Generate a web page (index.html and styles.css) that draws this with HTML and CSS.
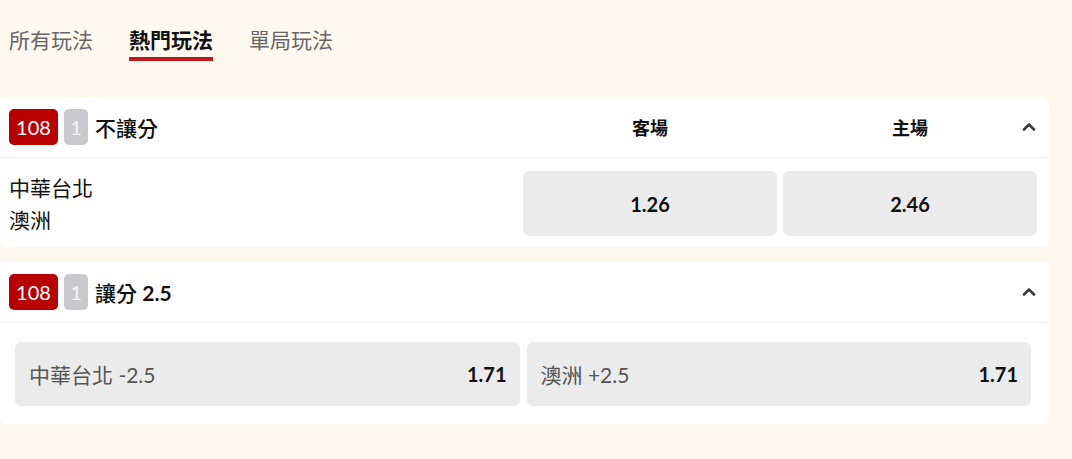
FILE: index.html
```html
<!DOCTYPE html>
<html lang="zh-Hant">
<head>
<meta charset="utf-8">
<link rel="stylesheet" href="styles.css">
</head>
<body>
<nav class="tabs">
  <div class="tab">所有玩法</div>
  <div class="tab active">熱門玩法</div>
  <div class="tab">單局玩法</div>
</nav>

<section class="card">
  <div class="card-head cols">
    <div class="title">
      <span class="badge red">108</span>
      <span class="badge grey">1</span>
      <span class="name">不讓分</span>
    </div>
    <div class="col-label">客場</div>
    <div class="col-label">主場</div>
    <svg class="chev" width="14" height="10" viewBox="0 0 14 10"><polyline points="2,8.5 7,3.5 12,8.5" fill="none" stroke="#3a3a3a" stroke-width="2.6" stroke-linecap="round" stroke-linejoin="round"/></svg>
  </div>
  <div class="row cols">
    <div class="teams">
      <div>中華台北</div>
      <div>澳洲</div>
    </div>
    <div class="odd center">1.26</div>
    <div class="odd center">2.46</div>
  </div>
</section>

<section class="card">
  <div class="card-head">
    <div class="title">
      <span class="badge red">108</span>
      <span class="badge grey">1</span>
      <span class="name">讓分 <span class="num">2.5</span></span>
    </div>
    <svg class="chev" width="14" height="10" viewBox="0 0 14 10"><polyline points="2,8.5 7,3.5 12,8.5" fill="none" stroke="#3a3a3a" stroke-width="2.6" stroke-linecap="round" stroke-linejoin="round"/></svg>
  </div>
  <div class="row spread">
    <div class="odd split"><span class="lbl">中華台北 -2.5</span><span class="val">1.71</span></div>
    <div class="odd split"><span class="lbl">澳洲 +2.5</span><span class="val">1.71</span></div>
  </div>
</section>
</body>
</html>
```

FILE: styles.css
```css
* { box-sizing: border-box; }

body {
  margin: 0;
  background: #fdf9ee;
  font-family: "Lato", "Noto Sans CJK TC", "Noto Sans", sans-serif;
  color: #111;
}

.tabs {
  display: flex;
  gap: 36px;
  padding: 26px 0 0 9px;
}

.tab {
  font-size: 21px;
  line-height: 28px;
  padding-bottom: 3px;
  border-bottom: 4px solid transparent;
  color: #666;
  white-space: nowrap;
}

.tab.active {
  color: #111;
  font-weight: 700;
  border-bottom-color: #bf1a1a;
}

.card {
  position: relative;
  background: #fff;
  border-radius: 6px;
  width: 1049px;
  margin-top: 36px;
}

.card + .card { margin-top: 15px; }

.card-head {
  position: relative;
  height: 61px;
  border-bottom: 1px solid #f1f1f1;
  display: flex;
  align-items: center;
  padding-left: 9px;
}

.cols {
  display: grid;
  grid-template-columns: 1fr 254px 254px;
  column-gap: 6px;
  padding-right: 12px;
  align-items: center;
}

.title {
  display: flex;
  align-items: center;
  gap: 6px;
}

.badge {
  display: inline-flex;
  align-items: center;
  justify-content: center;
  height: 36px;
  border-radius: 5px;
  font-size: 20px;
  color: #fff;
}

.badge.red { background: #b80000; padding: 0 7px; min-width: 49px; }
.badge.grey { background: #c9c9cd; width: 24px; color: #f4f4f6; }

.name {
  font-size: 21px;
  font-weight: 500;
  margin-left: 1px;
}

.num { font-weight: 700; }

.col-label {
  text-align: center;
  font-size: 18px;
  font-weight: 700;
}

.chev {
  position: absolute;
  right: 13px;
  top: 50%;
  margin-top: -6px;
}

.row {
  padding: 13px 12px 11px 9px;
}

.teams {
  font-size: 21px;
  line-height: 32px;
}

.odd {
  background: #ebebeb;
  border-radius: 6px;
  height: 65px;
  font-size: 20px;
  font-weight: 700;
}

.odd.center {
  display: flex;
  align-items: center;
  justify-content: center;
}

.spread {
  display: flex;
  gap: 7px;
  padding: 19px 18px 18px 15px;
}

.odd.split {
  flex: 1;
  height: 64px;
  display: flex;
  align-items: center;
  justify-content: space-between;
  padding: 0 13px 0 14px;
}

.lbl {
  font-weight: 400;
  color: #555;
  font-size: 21px;
}

.val { color: #111; }
```
